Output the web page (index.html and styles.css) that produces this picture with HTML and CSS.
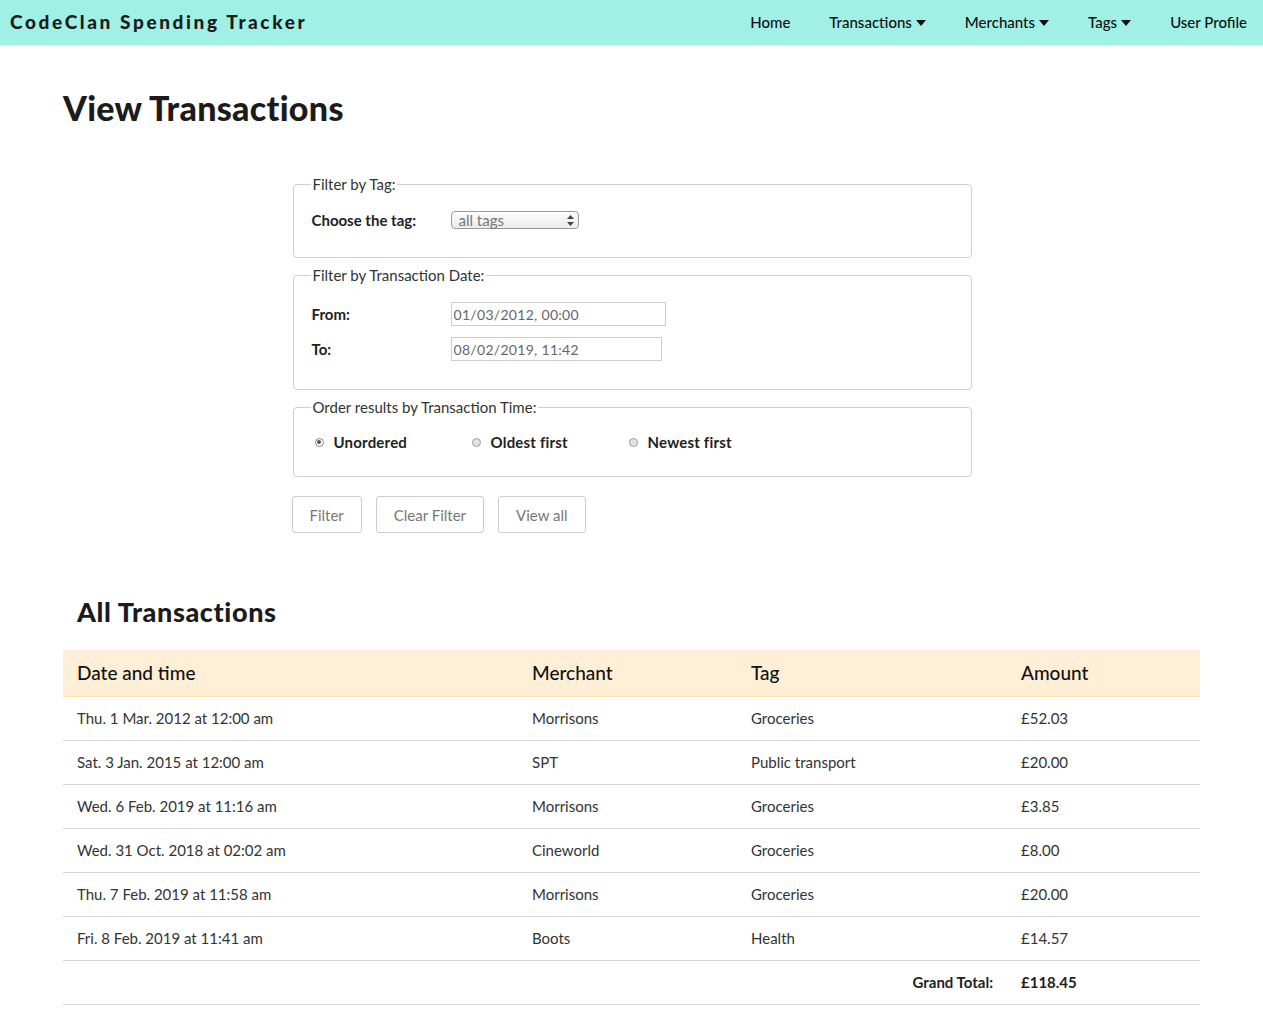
FILE: index.html
```html
<!DOCTYPE html>
<html lang="en">
<head>
<meta charset="utf-8">
<title>View Transactions</title>
<link rel="stylesheet" href="styles.css">
</head>
<body>
<header class="topbar">
  <div class="brand">CodeClan Spending Tracker</div>
  <nav class="nav">
    <a class="nav-item" href="#">Home</a>
    <a class="nav-item" href="#">Transactions <svg class="caret" width="10" height="6" viewBox="0 0 10 6"><path d="M0 0H10L5 6Z"/></svg></a>
    <a class="nav-item" href="#">Merchants <svg class="caret" width="10" height="6" viewBox="0 0 10 6"><path d="M0 0H10L5 6Z"/></svg></a>
    <a class="nav-item" href="#">Tags <svg class="caret" width="10" height="6" viewBox="0 0 10 6"><path d="M0 0H10L5 6Z"/></svg></a>
    <a class="nav-item" href="#">User Profile</a>
  </nav>
</header>

<main class="main">
  <h1 class="page-title">View Transactions</h1>

  <form class="filters">
    <fieldset class="box box-tag">
      <legend>Filter by Tag:</legend>
      <div class="row">
        <label class="lbl">Choose the tag:</label>
        <div class="select"><span>all tags</span>
          <svg width="7" height="11" viewBox="0 0 7 11"><path d="M3.5 0L7 4H0Z M0 7H7L3.5 11Z" fill="#444"/></svg>
        </div>
      </div>
    </fieldset>

    <fieldset class="box box-date">
      <legend>Filter by Transaction Date:</legend>
      <div class="row">
        <label class="lbl">From:</label>
        <input class="field field-from" type="text" value="01/03/2012, 00:00">
      </div>
      <div class="row row-gap">
        <label class="lbl">To:</label>
        <input class="field field-to" type="text" value="08/02/2019, 11:42">
      </div>
    </fieldset>

    <fieldset class="box box-order">
      <legend>Order results by Transaction Time:</legend>
      <div class="radios">
        <label class="radio"><span class="dot checked"></span>Unordered</label>
        <label class="radio"><span class="dot"></span>Oldest first</label>
        <label class="radio"><span class="dot"></span>Newest first</label>
      </div>
    </fieldset>

    <div class="buttons">
      <button type="button" class="btn">Filter</button>
      <button type="button" class="btn">Clear Filter</button>
      <button type="button" class="btn">View all</button>
    </div>
  </form>

  <h2 class="section-title">All Transactions</h2>

  <table class="tx">
    <colgroup>
      <col class="c1"><col class="c2"><col class="c3"><col class="c4">
    </colgroup>
    <thead>
      <tr><th>Date and time</th><th>Merchant</th><th>Tag</th><th>Amount</th></tr>
    </thead>
    <tbody>
      <tr><td>Thu. 1 Mar. 2012 at 12:00 am</td><td>Morrisons</td><td>Groceries</td><td>£52.03</td></tr>
      <tr><td>Sat. 3 Jan. 2015 at 12:00 am</td><td>SPT</td><td>Public transport</td><td>£20.00</td></tr>
      <tr><td>Wed. 6 Feb. 2019 at 11:16 am</td><td>Morrisons</td><td>Groceries</td><td>£3.85</td></tr>
      <tr><td>Wed. 31 Oct. 2018 at 02:02 am</td><td>Cineworld</td><td>Groceries</td><td>£8.00</td></tr>
      <tr><td>Thu. 7 Feb. 2019 at 11:58 am</td><td>Morrisons</td><td>Groceries</td><td>£20.00</td></tr>
      <tr><td>Fri. 8 Feb. 2019 at 11:41 am</td><td>Boots</td><td>Health</td><td>£14.57</td></tr>
      <tr class="total"><td colspan="3" class="total-label">Grand Total:</td><td class="total-value">£118.45</td></tr>
    </tbody>
  </table>
</main>
</body>
</html>
```

FILE: styles.css
```css
* { box-sizing: border-box; }

body {
  margin: 0;
  font-family: Lato, "Open Sans", sans-serif;
  color: #222;
  background: #fff;
}

.topbar {
  height: 45px;
  background: #a0f0e6;
  display: flex;
  align-items: center;
  justify-content: space-between;
  padding: 0 16px 0 10px;
}

.brand {
  font-family: Lato, sans-serif;
  font-weight: 900;
  font-size: 19px;
  letter-spacing: 2.6px;
  color: #1b1b1b;
  margin-top: -3px;
}

.nav {
  display: flex;
  gap: 39px;
  align-items: center;
  margin-top: -1px;
}

.nav-item {
  font-size: 15px;
  color: #111;
  text-decoration: none;
  display: flex;
  align-items: center;
  gap: 4px;
  font-weight: 500;
}

.caret { fill: #111; margin-top: 2px; }

.main { padding: 0; }

.page-title {
  margin: 43px 0 0 63px;
  font-size: 34px;
  line-height: 40px;
  font-weight: 900;
  color: #1b1b1b;
  letter-spacing: 0.3px;
}

.filters {
  width: 680px;
  margin: 48px auto 0;
  padding-left: 1px;
}

.box {
  border: 1px solid #cfcfcf;
  border-radius: 4px;
  margin: 0 0 9px;
  padding: 0 18px;
  min-width: 0;
}

.box legend {
  font-size: 15px;
  color: #333;
  padding: 0 2px;
  margin-left: -1px;
  line-height: 17px;
}

.box-tag { padding-top: 14px; padding-bottom: 24px; }
.box-date { padding-top: 17px; padding-bottom: 27px; }
.box-order { padding-top: 14px; padding-bottom: 22px; }

.row {
  display: flex;
  align-items: center;
  height: 26px;
}

.row-gap { margin-top: 9px; }

.lbl {
  width: 139px;
  font-size: 15px;
  font-weight: 700;
  color: #222;
}

.select {
  width: 128px;
  height: 18px;
  border: 1px solid #9a9a9a;
  border-radius: 4px;
  background: linear-gradient(#fdfdfd, #ececec);
  display: flex;
  align-items: center;
  justify-content: space-between;
  padding: 0 4px 0 7px;
  font-size: 15px;
  color: #777;
}

.field {
  height: 24px;
  border: 1px solid #cdcdcd;
  border-radius: 0;
  padding: 0 2px;
  font-family: Lato, sans-serif;
  font-size: 14px;
  color: #666;
  letter-spacing: 0.3px;
  background: #fff;
}

.field-from { width: 215px; }
.field-to { width: 211px; }

.radios {
  display: grid;
  grid-template-columns: 157px 157px 157px;
  height: 24px;
  align-items: center;
  margin-left: 4px;
}

.radio {
  display: flex;
  align-items: center;
  font-size: 15px;
  font-weight: 700;
  color: #222;
  letter-spacing: 0.2px;
}

.dot {
  width: 9px;
  height: 9px;
  border-radius: 50%;
  border: 1px solid #9c9c9c;
  background: #e4e4e4;
  margin-right: 10px;
  margin-left: -1px;
  position: relative;
}

.dot.checked {
  background: #fff;
  border-color: #888;
}

.dot.checked::after {
  content: "";
  position: absolute;
  left: 1.5px;
  top: 1.5px;
  width: 4px;
  height: 4px;
  border-radius: 50%;
  background: #555;
}

.buttons {
  display: flex;
  gap: 14px;
  margin-top: 19px;
  margin-left: -1px;
}

.btn {
  height: 37px;
  padding: 0 17px;
  border: 1px solid #cccccc;
  border-radius: 3px;
  background: #fff;
  color: #777;
  font-family: Lato, sans-serif;
  font-size: 15px;
}

.section-title {
  margin: 62px 0 0 77px;
  font-size: 27px;
  line-height: 34px;
  font-weight: 900;
  color: #1b1b1b;
  letter-spacing: 0.6px;
}

.tx {
  margin: 21px 0 0 63px;
  width: 1137px;
  border-collapse: collapse;
  table-layout: fixed;
}

.c1 { width: 455px; }
.c2 { width: 219px; }
.c3 { width: 270px; }
.c4 { width: 193px; }

.tx th {
  background: #ffefd6;
  height: 46px;
  text-align: left;
  padding: 0 14px;
  font-size: 19px;
  font-weight: 500;
  color: #111;
  border-bottom: 1px solid #fde1ae;
}

.tx td {
  height: 44px;
  padding: 0 14px;
  font-size: 15px;
  color: #333;
  border-bottom: 1px solid #d6d6d6;
}

.tx .total-label {
  text-align: right;
  font-weight: 700;
  color: #222;
}

.tx .total-value {
  font-weight: 700;
  color: #222;
}
```
